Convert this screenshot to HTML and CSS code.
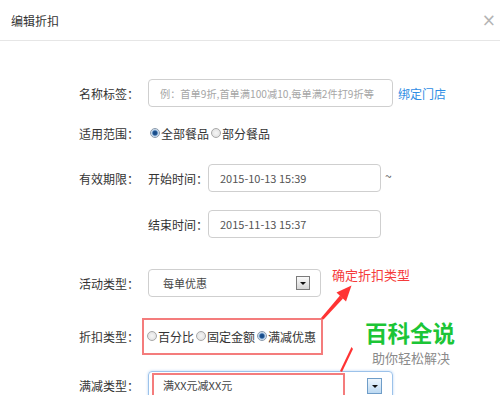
FILE: index.html
```html
<!DOCTYPE html>
<html lang="zh-CN">
<head>
<meta charset="utf-8">
<title>编辑折扣</title>
<link rel="stylesheet" href="styles.css">
</head>
<body>
<div class="header">
  <span class="title">编辑折扣</span>
  <span class="close">×</span>
</div>
<div class="form">
  <div class="row r1">
    <span class="label">名称标签：</span>
    <div class="input wide placeholder">例：首单9折,首单满100减10,每单满2件打9折等</div>
    <a class="link">绑定门店</a>
  </div>
  <div class="row r2">
    <span class="label">适用范围：</span>
    <span class="radio"><span class="dot on"></span>全部餐品</span>
    <span class="radio"><span class="dot"></span>部分餐品</span>
  </div>
  <div class="row r3">
    <span class="label">有效期限：</span>
    <span class="sublabel">开始时间：</span>
    <div class="input date">2015-10-13 15:39</div>
    <span class="tilde">~</span>
  </div>
  <div class="row r4">
    <span class="label"></span>
    <span class="sublabel">结束时间：</span>
    <div class="input date">2015-11-13 15:37</div>
  </div>
  <div class="row r5">
    <span class="label">活动类型：</span>
    <div class="select narrow"><span>每单优惠</span><span class="btn"></span></div>
  </div>
  <div class="row r6">
    <span class="label">折扣类型：</span>
    <span class="radio"><span class="dot"></span>百分比</span>
    <span class="radio"><span class="dot"></span>固定金额</span>
    <span class="radio"><span class="dot on"></span>满减优惠</span>
  </div>
  <div class="row r7">
    <span class="label">满减类型：</span>
    <div class="select wide focus"><span>满XX元减XX元</span><span class="btn blue"></span></div>
  </div>
</div>

<div class="annot-box box1"></div>
<div class="annot-box box2"></div>
<div class="note">确定折扣类型</div>
<svg class="arrows" width="500" height="395" viewBox="0 0 500 395">
  <polygon points="321,318 323.5,319.5 343,298.5 340,295.5" fill="#f33"/>
  <polygon points="351.5,285.5 336.5,292.5 346,301.5" fill="#f33"/>
  <polygon points="340,371 342,372 353,349 351.5,347" fill="#f33"/>
</svg>
<div class="mark">
  <div class="mark-big">百科全说</div>
  <div class="mark-small">助你轻松解决</div>
</div>
</body>
</html>
```

FILE: styles.css
```css
html, body {
  margin: 0;
  padding: 0;
  overflow: hidden;
  background: #fff;
}
body {
  width: 500px;
  height: 395px;
  position: relative;
  font-family: "Noto Sans CJK SC", "Noto Sans", sans-serif;
  font-size: 12px;
  color: #333;
}
.header {
  height: 40px;
  border-bottom: 1px solid #e6e6e6;
  display: flex;
  align-items: center;
  justify-content: space-between;
  padding: 0 4px 0 11px;
}
.title {
  font-size: 12px;
  color: #333;
}
.close {
  font-size: 17px;
  color: #b4b4b4;
  font-family: "DejaVu Sans", sans-serif;
}
.form {
  padding-left: 79px;
}
.row {
  display: flex;
  align-items: center;
}
.label {
  width: 69px;
  flex: none;
}
.sublabel {
  width: 60px;
  flex: none;
}
.r1 { margin-top: 38px; height: 28px; }
.r2 { margin-top: 16px; height: 20px; }
.r3 { margin-top: 21px; height: 28px; }
.r4 { margin-top: 18px; height: 28px; }
.r5 { margin-top: 31px; height: 28px; }
.r6 { margin-top: 21px; height: 36px; }
.r7 { margin-top: 17px; height: 28px; }

.r2 .label { margin-right: 2px; }
.r6 .label { margin-right: -1px; }

.input {
  box-sizing: border-box;
  height: 28px;
  border: 1px solid #cfcfcf;
  border-radius: 4px;
  display: flex;
  align-items: center;
  padding-left: 11px;
  font-size: 11px;
  color: #555;
}
.input.wide { width: 245px; }
.input.date { width: 173px; }
.placeholder {
  color: #a6a6a6;
  font-size: 10.2px;
}
.link {
  margin-left: 5px;
  color: #2f8de4;
  font-size: 12px;
}
.tilde {
  margin-left: 4px;
  margin-top: -5px;
  color: #555;
}
.radio {
  display: inline-flex;
  align-items: center;
  margin-right: 2px;
  font-size: 12px;
}
.dot {
  box-sizing: border-box;
  width: 10px;
  height: 10px;
  border-radius: 50%;
  border: 1px solid #a8a8a8;
  background: radial-gradient(circle, #f6f6f6 0, #dcdcdc 100%);
  margin-right: 1px;
}
.dot.on {
  border-color: #8a9aab;
  background: radial-gradient(circle, #17467f 0, #1e5594 2px, #9fbfe0 3px, #e6edf5 4px);
}
.select {
  box-sizing: border-box;
  height: 28px;
  border: 1px solid #cfcfcf;
  border-radius: 4px;
  display: flex;
  align-items: center;
  justify-content: space-between;
  padding: 0 10px 0 14px;
  font-size: 11px;
  color: #444;
}
.select.narrow { width: 173px; }
.select.wide { width: 245px; }
.select.focus {
  border-color: #9cc2ea;
  box-shadow: 0 0 3px #b9d5f2;
}
.btn {
  box-sizing: border-box;
  width: 14px;
  height: 14px;
  border: 1px solid #7b7b7b;
  background: linear-gradient(#fafafa, #d6d6d6);
  display: flex;
  align-items: center;
  justify-content: center;
}
.btn::after {
  content: "";
  border-left: 3px solid transparent;
  border-right: 3px solid transparent;
  border-top: 3px solid #111;
}
.btn.blue {
  width: 15px;
  height: 16px;
  border-color: #6f9dc8;
  background: linear-gradient(#eef6fd, #bcd9f2);
  margin-top: 2px;
}

.annot-box {
  position: absolute;
  box-sizing: border-box;
  border: 2px solid #f47c7c;
}
.box1 {
  left: 142px;
  top: 318px;
  width: 181px;
  height: 37px;
}
.box2 {
  left: 152px;
  top: 373px;
  width: 193px;
  height: 30px;
}
.note {
  position: absolute;
  left: 332px;
  top: 265px;
  font-size: 13px;
  color: #f53b3b;
}
.arrows {
  position: absolute;
  left: 0;
  top: 0;
}
.mark {
  position: absolute;
  left: 365px;
  top: 318px;
}
.mark-big {
  font-size: 22.5px;
  font-weight: bold;
  color: #1cc536;
  line-height: 28px;
}
.mark-small {
  font-size: 13px;
  color: #8a8a8a;
  line-height: 18px;
  margin-left: 7px;
  margin-top: 3px;
}
```
